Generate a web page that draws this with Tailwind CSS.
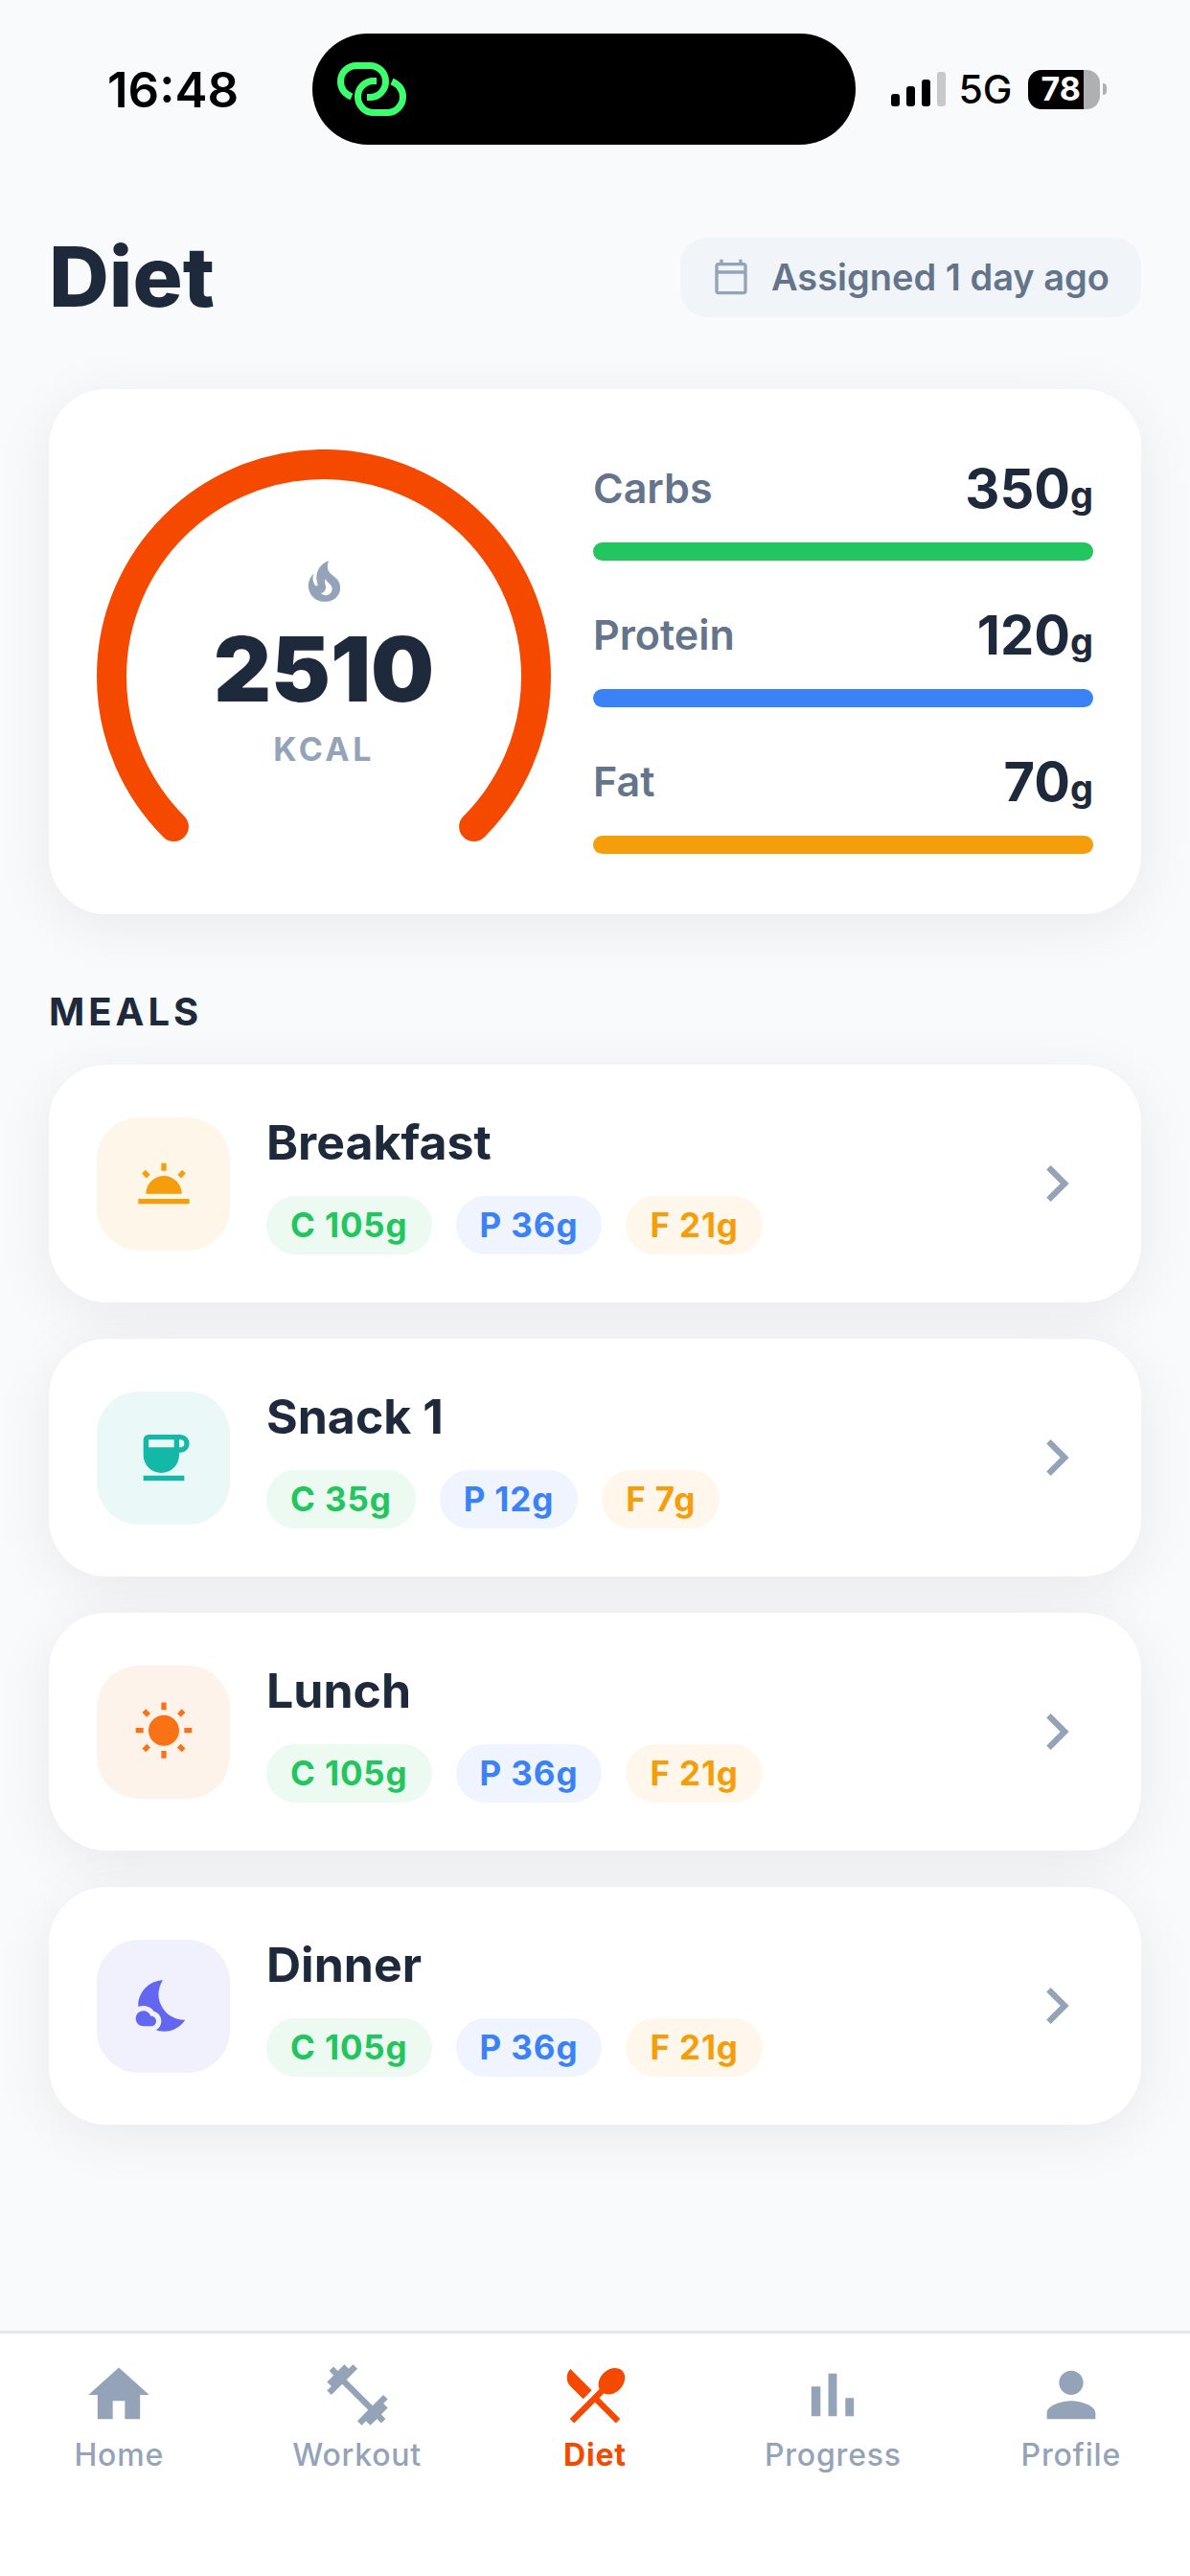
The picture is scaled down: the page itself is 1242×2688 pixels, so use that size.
<!DOCTYPE html>
<html lang="en">
  <head>
    <meta charset="UTF-8">
    <meta name="viewport" content="width=device-width, initial-scale=1.0">
    <title>Diet</title>
    <script src="https://cdn.jsdelivr.net/npm/@tailwindcss/browser@4"></script>
  </head>
  <body class="flex min-h-screen flex-col bg-[#f8fafc] font-['Inter','Liberation_Sans',sans-serif] text-[#1e293b]">

    <!-- Status bar -->
    <div class="flex items-center pt-[35px] pr-6 text-black">
      <div class="flex-1 text-[51px] leading-none font-semibold"><span class="ml-[112px]">16:48</span></div>
      <div class="flex h-[116px] w-[567px] items-center rounded-full bg-black pl-[26px]">
        <svg class="h-14 w-[72px]" viewBox="0 0 72 56" fill="none" stroke="#3cff6e" stroke-width="7">
          <path d="M15 36C8 33 3.500 27.500 3.500 20A16.500 16.500 0 0 1 20 3.500H34A16.500 16.500 0 0 1 50.500 20 16.500 16.500 0 0 1 34 36.500H31"/>
          <path d="M57 20C64 23 68.500 28.500 68.500 36A16.500 16.500 0 0 1 52 52.500H38A16.500 16.500 0 0 1 21.500 36 16.500 16.500 0 0 1 38 19.500H41"/>
        </svg>
      </div>
      <div class="flex flex-1 items-center">
        <svg class="ml-[37px] h-9 w-[57px]" viewBox="0 0 57 36">
          <rect x="0" y="23" width="9" height="13" rx="3"/>
          <rect x="16" y="15" width="9" height="21" rx="3"/>
          <rect x="32" y="8" width="9" height="28" rx="3"/>
          <rect x="48" y="0" width="9" height="36" rx="3" fill="#c7c8ca"/>
        </svg>
        <span class="ml-[14px] text-[41px] leading-none font-medium">5G</span>
        <div class="ml-4 flex h-[41px] w-[75px] items-center overflow-hidden rounded-[14px] bg-linear-to-r from-black from-[78%] to-[#afb0b2] to-[78%] pl-[14px] text-[34px] leading-none font-bold text-white">78</div>
        <div class="ml-[3px] h-3 w-1 rounded-r-full bg-[#afb0b2]"></div>
      </div>
    </div>

    <main class="px-[51px] pb-12">
      <header class="mt-[84px] flex items-center justify-between">
        <h1 class="text-[87px] leading-[108px] font-extrabold">Diet</h1>
        <div class="flex h-[83px] items-center gap-[22px] rounded-[28px] bg-[#f1f5f9] px-[33px] text-[38px] font-semibold text-[#64748b]">
          <svg class="size-10" viewBox="0 0 24 24" fill="#94a3b8"><path d="M20 3h-1V1h-2v2H7V1H5v2H4c-1.100 0-2 .9-2 2v16c0 1.100.9 2 2 2h16c1.100 0 2-.9 2-2V5c0-1.100-.9-2-2-2zm0 18H4V10h16v11zm0-13H4V5h16v3z"/></svg>
          Assigned 1 day ago
        </div>
      </header>

      <!-- Daily totals -->
      <section class="mt-[63px] flex items-center gap-[44px] rounded-[60px] bg-white px-[50px] py-[63px] shadow-[0_12px_64px_rgba(0,0,0,0.07)]">
        <div class="relative w-[474px] shrink-0">
          <svg class="w-full" viewBox="0 0 474 422" fill="none" stroke="#f54900" stroke-width="31" stroke-linecap="round">
            <path d="M80.400 393.600A221.500 221.500 0 1 1 393.600 393.600"/>
          </svg>
          <div class="absolute inset-0 flex flex-col items-center pt-[109px]">
            <svg class="size-[57px]" viewBox="0 0 24 24" fill="#94a3b8"><path d="M17.660 11.200C17.430 10.900 17.150 10.640 16.890 10.380C16.220 9.780 15.460 9.350 14.820 8.720C13.330 7.260 13 4.850 13.950 3C13 3.230 12.170 3.750 11.460 4.320C8.870 6.400 7.850 10.070 9.070 13.220C9.110 13.320 9.150 13.420 9.150 13.550C9.150 13.770 9 13.970 8.800 14.050C8.570 14.150 8.330 14.090 8.140 13.930C8.080 13.880 8.040 13.830 8 13.760C6.870 12.330 6.690 10.280 7.450 8.640C5.780 10 4.870 12.300 5 14.470C5.060 14.970 5.120 15.470 5.290 15.970C5.430 16.570 5.700 17.170 6 17.700C7.080 19.430 8.950 20.670 10.960 20.920C13.100 21.190 15.390 20.800 17.030 19.320C18.860 17.660 19.500 15 18.560 12.720L18.430 12.460C18.220 12 17.660 11.200 17.660 11.200M14.500 17.500C14.220 17.740 13.760 18 13.400 18.100C12.280 18.500 11.160 17.940 10.500 17.280C11.690 17 12.400 16.120 12.610 15.230C12.780 14.430 12.460 13.770 12.330 13C12.210 12.260 12.230 11.630 12.500 10.940C12.690 11.320 12.890 11.700 13.130 12C13.900 13 15.110 13.440 15.370 14.800C15.410 14.940 15.430 15.080 15.430 15.230C15.460 16.050 15.100 16.950 14.500 17.500Z"/></svg>
            <strong class="mt-[13px] text-[93px] leading-[100px] font-black">2510</strong>
            <span class="mt-3 text-[34px] leading-[44px] font-bold tracking-widest text-[#94a3b8]">KCAL</span>
          </div>
        </div>
        <div class="flex flex-1 flex-col gap-[38px]">
          <div>
            <div class="flex h-20 items-center justify-between">
              <span class="text-[43px] font-semibold text-[#64748b]">Carbs</span>
              <span class="text-[56px] font-bold">350<span class="text-[38px]">g</span></span>
            </div>
            <div class="mt-4 h-[19px] rounded-full bg-[#22c55e]"></div>
          </div>
          <div>
            <div class="flex h-20 items-center justify-between">
              <span class="text-[43px] font-semibold text-[#64748b]">Protein</span>
              <span class="text-[56px] font-bold">120<span class="text-[38px]">g</span></span>
            </div>
            <div class="mt-4 h-[19px] rounded-full bg-[#3b82f6]"></div>
          </div>
          <div>
            <div class="flex h-20 items-center justify-between">
              <span class="text-[43px] font-semibold text-[#64748b]">Fat</span>
              <span class="text-[56px] font-bold">70<span class="text-[38px]">g</span></span>
            </div>
            <div class="mt-4 h-[19px] rounded-full bg-[#f59e0b]"></div>
          </div>
        </div>
      </section>

      <h2 class="mt-[78px] mb-[31px] text-[40px] leading-[48px] font-bold tracking-widest">MEALS</h2>

      <div class="flex flex-col gap-[38px]">
        <a href="#breakfast" class="flex items-center rounded-[60px] bg-white p-[50px] shadow-[0_12px_64px_rgba(0,0,0,0.07)]">
          <div class="flex size-[139px] items-center justify-center rounded-[44px] bg-[#fef6e9]">
            <svg class="size-16" viewBox="0 0 24 24" fill="#f59e0b"><path d="M2 18h20v2H2zM5 16a7 7 0 0 1 14 0zM11 4h2v3h-2zM3.400 8.100l1.400-1.400 1.850 1.850-1.400 1.400zM20.600 8.100l-1.400-1.400-1.850 1.850 1.400 1.400z"/></svg>
          </div>
          <div class="ml-[38px] flex-1">
            <h3 class="text-[50px] leading-[62px] font-bold">Breakfast</h3>
            <div class="mt-[25px] flex gap-[25px] text-[35px] leading-[61px] font-bold tracking-wide">
              <span class="rounded-full bg-[#ecfaf1] px-[25px] text-[#22c55e]">C 105g</span>
              <span class="rounded-full bg-[#eff4ff] px-[25px] text-[#3b82f6]">P 36g</span>
              <span class="rounded-full bg-[#fff7eb] px-[25px] text-[#f59e0b]">F 21g</span>
            </div>
          </div>
          <svg class="size-[76px]" viewBox="0 0 24 24" fill="#94a3b8"><path d="M10 6 8.590 7.410 13.170 12l-4.580 4.590L10 18l6-6z"/></svg>
        </a>

        <a href="#snack-1" class="flex items-center rounded-[60px] bg-white p-[50px] shadow-[0_12px_64px_rgba(0,0,0,0.07)]">
          <div class="flex size-[139px] items-center justify-center rounded-[44px] bg-[#eaf8f7]">
            <svg class="size-16" viewBox="0 0 24 24" fill="#14b8a6" fill-rule="evenodd"><path d="M4 19h16v2H4zM6 3h12.500a3.500 3.500 0 0 1 0 7H18v1a7 7 0 0 1-14 0V5a2 2 0 0 1 2-2zM6 5v3h10V5zM18 5v3h.500a1.500 1.500 0 0 0 0-3z"/></svg>
          </div>
          <div class="ml-[38px] flex-1">
            <h3 class="text-[50px] leading-[62px] font-bold">Snack 1</h3>
            <div class="mt-[25px] flex gap-[25px] text-[35px] leading-[61px] font-bold tracking-wide">
              <span class="rounded-full bg-[#ecfaf1] px-[25px] text-[#22c55e]">C 35g</span>
              <span class="rounded-full bg-[#eff4ff] px-[25px] text-[#3b82f6]">P 12g</span>
              <span class="rounded-full bg-[#fff7eb] px-[25px] text-[#f59e0b]">F 7g</span>
            </div>
          </div>
          <svg class="size-[76px]" viewBox="0 0 24 24" fill="#94a3b8"><path d="M10 6 8.590 7.410 13.170 12l-4.580 4.590L10 18l6-6z"/></svg>
        </a>

        <a href="#lunch" class="flex items-center rounded-[60px] bg-white p-[50px] shadow-[0_12px_64px_rgba(0,0,0,0.07)]">
          <div class="flex size-[139px] items-center justify-center rounded-[44px] bg-[#fef3eb]">
            <svg class="size-16" viewBox="0 0 24 24" fill="#f97316"><path d="m6.760 4.840-1.800-1.790-1.410 1.410 1.790 1.790 1.420-1.410zM4 10.500H1v2h3v-2zm9-9.950h-2V3.500h2V.55zm7.450 3.910-1.410-1.410-1.790 1.790 1.410 1.410 1.790-1.790zm-3.210 13.700 1.790 1.800 1.410-1.410-1.800-1.790-1.400 1.400zM20 10.500v2h3v-2h-3zm-8-5c-3.310 0-6 2.690-6 6s2.690 6 6 6 6-2.690 6-6-2.690-6-6-6zm-1 16.950h2V19.500h-2v2.950zm-7.450-3.910 1.410 1.410 1.790-1.800-1.410-1.410-1.790 1.800z"/></svg>
          </div>
          <div class="ml-[38px] flex-1">
            <h3 class="text-[50px] leading-[62px] font-bold">Lunch</h3>
            <div class="mt-[25px] flex gap-[25px] text-[35px] leading-[61px] font-bold tracking-wide">
              <span class="rounded-full bg-[#ecfaf1] px-[25px] text-[#22c55e]">C 105g</span>
              <span class="rounded-full bg-[#eff4ff] px-[25px] text-[#3b82f6]">P 36g</span>
              <span class="rounded-full bg-[#fff7eb] px-[25px] text-[#f59e0b]">F 21g</span>
            </div>
          </div>
          <svg class="size-[76px]" viewBox="0 0 24 24" fill="#94a3b8"><path d="M10 6 8.590 7.410 13.170 12l-4.580 4.590L10 18l6-6z"/></svg>
        </a>

        <a href="#dinner" class="flex items-center rounded-[60px] bg-white p-[50px] shadow-[0_12px_64px_rgba(0,0,0,0.07)]">
          <div class="flex size-[139px] items-center justify-center rounded-[44px] bg-[#f1f1fe]">
            <svg class="size-16" viewBox="0 0 24 24" fill="#6366f1"><path d="M11.100 12.080c-2.330-4.510-.5-8.480.53-10.070C6.270 2.200 1.980 6.590 1.980 12c0 .14.02.28.02.42.62-.27 1.290-.42 2-.42 1.660 0 3.180.83 4.100 2.150 1.670.48 2.900 2.020 2.900 3.850 0 1.520-.87 2.830-2.120 3.510.98.32 2.030.5 3.110.5 3.500 0 6.580-1.800 8.370-4.520-2.360.23-6.980-.97-9.260-5.410z"/><path d="M7 16h-.18C6.400 14.840 5.300 14 4 14c-1.660 0-3 1.340-3 3s1.340 3 3 3h3c1.100 0 2-.9 2-2s-.9-2-2-2z"/></svg>
          </div>
          <div class="ml-[38px] flex-1">
            <h3 class="text-[50px] leading-[62px] font-bold">Dinner</h3>
            <div class="mt-[25px] flex gap-[25px] text-[35px] leading-[61px] font-bold tracking-wide">
              <span class="rounded-full bg-[#ecfaf1] px-[25px] text-[#22c55e]">C 105g</span>
              <span class="rounded-full bg-[#eff4ff] px-[25px] text-[#3b82f6]">P 36g</span>
              <span class="rounded-full bg-[#fff7eb] px-[25px] text-[#f59e0b]">F 21g</span>
            </div>
          </div>
          <svg class="size-[76px]" viewBox="0 0 24 24" fill="#94a3b8"><path d="M10 6 8.590 7.410 13.170 12l-4.580 4.590L10 18l6-6z"/></svg>
        </a>
      </div>
    </main>

    <!-- Tab bar -->
    <nav class="mt-auto grid grid-cols-5 border-t-[3px] border-[#e2e8f0] bg-white pt-[26px] pb-[106px] text-[32px] leading-10 font-medium tracking-wide text-[#94a3b8]">
      <a href="#home" class="flex flex-col items-center gap-[5px]">
        <svg class="size-[76px]" viewBox="0 0 24 24" fill="currentColor"><path d="M10 20v-6h4v6h5v-8h3L12 3 2 12h3v8z"/></svg>
        Home
      </a>
      <a href="#workout" class="flex flex-col items-center gap-[5px]">
        <svg class="size-[76px]" viewBox="0 0 24 24" fill="currentColor"><path d="M20.570 14.860 22 13.430 20.570 12 17 15.570 8.430 7 12 3.430 10.570 2 9.140 3.430 7.710 2 5.570 4.140 4.140 2.710 2.710 4.140l1.430 1.430L2 7.710l1.430 1.430L2 10.570 3.430 12 7 8.430 15.570 17 12 20.570 13.430 22l1.430-1.430L16.290 22l2.140-2.140 1.430 1.430 1.430-1.430-1.430-1.430L22 16.290z"/></svg>
        Workout
      </a>
      <a href="#diet" aria-current="page" class="flex flex-col items-center gap-[5px] font-bold text-[#f54900]">
        <svg class="size-[76px]" viewBox="0 0 24 24" fill="currentColor"><path d="M8.100 13.340l2.830-2.830L3.910 3.500c-1.560 1.560-1.560 4.090 0 5.660l4.190 4.180zm6.780-1.810c1.530.71 3.680.21 5.270-1.380 1.910-1.910 2.280-4.650.81-6.120-1.460-1.460-4.200-1.100-6.120.81-1.590 1.590-2.090 3.740-1.380 5.270L3.700 19.870l1.410 1.410L12 14.410l6.880 6.880 1.410-1.410L13.410 13l1.470-1.470z"/></svg>
        Diet
      </a>
      <a href="#progress" class="flex flex-col items-center gap-[5px]">
        <svg class="size-[76px]" viewBox="0 0 24 24" fill="currentColor"><path d="M5 9.200h3V19H5zM10.600 5h2.800v14h-2.800zm5.600 8H19v6h-2.800z"/></svg>
        Progress
      </a>
      <a href="#profile" class="flex flex-col items-center gap-[5px]">
        <svg class="size-[76px]" viewBox="0 0 24 24" fill="currentColor"><path d="M12 12c2.210 0 4-1.790 4-4s-1.790-4-4-4-4 1.790-4 4 1.790 4 4 4zm0 2c-2.670 0-8 1.340-8 4v2h16v-2c0-2.660-5.330-4-8-4z"/></svg>
        Profile
      </a>
    </nav>
  </body>
</html>
